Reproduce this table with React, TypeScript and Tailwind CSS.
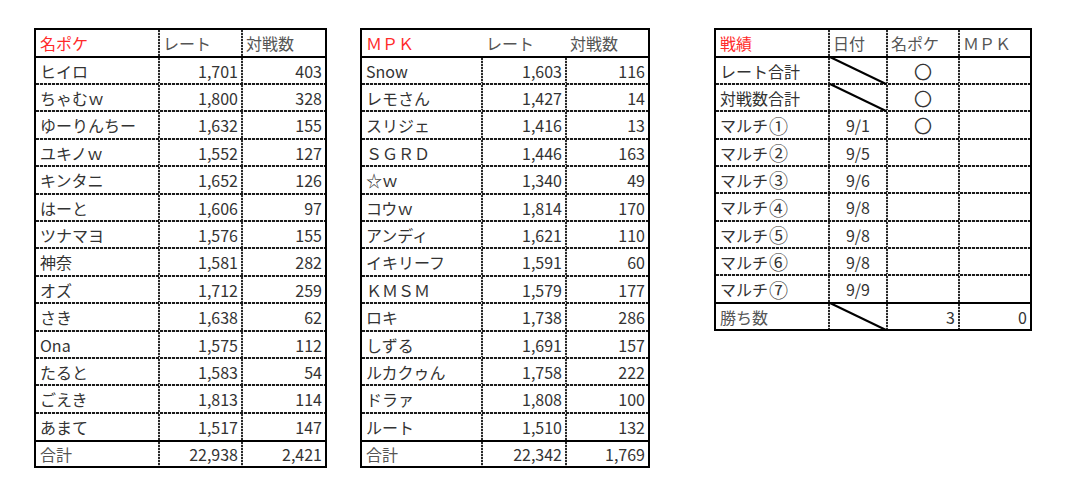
import React from "react";

type Cell = { t?: React.ReactNode; a?: "l" | "r" | "c"; red?: boolean; head?: boolean; diag?: boolean };

const HL =
  "h-[2px] bg-[repeating-linear-gradient(90deg,#1a1a1a_0px,#1a1a1a_3px,#e6e6e6_3px,#e6e6e6_4px)]";
const VL =
  "bg-[repeating-linear-gradient(180deg,#2a2a2a_0px,#2a2a2a_2px,#d8d8d8_2px,#d8d8d8_3px)]";

function Row({
  cells,
  widths,
  h,
  seps = true,
}: {
  cells: Cell[];
  widths: string[];
  h: string;
  seps?: boolean;
}) {
  return (
    <div className={`flex ${h}`}>
      {cells.map((c, j) => (
        <React.Fragment key={j}>
          {j > 0 && <div className={`w-[2px] shrink-0 ${seps ? VL : ""}`} />}
          <div
            className={`${widths[j]} shrink-0 relative flex items-center whitespace-nowrap ${
              c.a === "r"
                ? "justify-end pr-[3px]"
                : c.a === "c"
                ? "justify-center"
                : j === 0
                ? "justify-start pl-[4px]"
                : "justify-start pl-[3px]"
            } ${c.red ? "text-[#ff2a2a]" : c.head ? "text-[#555555]" : "text-[#333333]"}`}
          >
            {c.diag && (
              <svg
                className="absolute left-0 top-[-1px] w-full h-[calc(100%+2px)] overflow-visible"
                viewBox="0 0 100 100"
                preserveAspectRatio="none"
              >
                <line x1="0" y1="0" x2="100" y2="100" stroke="#000" strokeWidth="2" vectorEffect="non-scaling-stroke" />
              </svg>
            )}
            {c.t}
          </div>
        </React.Fragment>
      ))}
    </div>
  );
}

function Table({
  widths,
  header,
  headerSeps,
  rows,
  heights,
  total,
  totalH,
}: {
  widths: string[];
  header: Cell[];
  headerSeps: boolean;
  rows: Cell[][];
  heights: string[];
  total: Cell[];
  totalH: string;
}) {
  return (
    <div className="border-2 border-black flex flex-col shrink-0">
      <Row cells={header} widths={widths} h="h-[26px]" seps={headerSeps} />
      <div className="h-[2px] bg-black" />
      {rows.map((r, i) => (
        <React.Fragment key={i}>
          <Row cells={r} widths={widths} h={heights[i]} />
          {i < rows.length - 1 && <div className={HL} />}
        </React.Fragment>
      ))}
      <div className="h-[2px] bg-black" />
      <Row cells={total} widths={widths} h={totalH} />
    </div>
  );
}

const H14 = [
  "h-[25px]",
  "h-[25px]",
  "h-[26px]",
  "h-[25px]",
  "h-[26px]",
  "h-[25px]",
  "h-[25px]",
  "h-[26px]",
  "h-[25px]",
  "h-[26px]",
  "h-[25px]",
  "h-[25px]",
  "h-[26px]",
  "h-[26px]",
];
const H9 = ["h-[25px]", "h-[25px]", "h-[26px]", "h-[25px]", "h-[25px]", "h-[26px]", "h-[25px]", "h-[25px]", "h-[26px]"];

const t1: [string, string, string][] = [
  ["ヒイロ", "1,701", "403"],
  ["ちゃむｗ", "1,800", "328"],
  ["ゆーりんちー", "1,632", "155"],
  ["ユキノｗ", "1,552", "127"],
  ["キンタニ", "1,652", "126"],
  ["はーと", "1,606", "97"],
  ["ツナマヨ", "1,576", "155"],
  ["神奈", "1,581", "282"],
  ["オズ", "1,712", "259"],
  ["さき", "1,638", "62"],
  ["Ona", "1,575", "112"],
  ["たると", "1,583", "54"],
  ["ごえき", "1,813", "114"],
  ["あまて", "1,517", "147"],
];

const t2: [string, string, string][] = [
  ["Snow", "1,603", "116"],
  ["レモさん", "1,427", "14"],
  ["スリジェ", "1,416", "13"],
  ["ＳＧＲＤ", "1,446", "163"],
  ["☆ｗ", "1,340", "49"],
  ["コウｗ", "1,814", "170"],
  ["アンディ", "1,621", "110"],
  ["イキリーフ", "1,591", "60"],
  ["ＫＭＳＭ", "1,579", "177"],
  ["ロキ", "1,738", "286"],
  ["しずる", "1,691", "157"],
  ["ルカクゥん", "1,758", "222"],
  ["ドラァ", "1,808", "100"],
  ["ルート", "1,510", "132"],
];

const toRows = (d: [string, string, string][]): Cell[][] =>
  d.map(([a, b, c]) => [{ t: a }, { t: b, a: "r" }, { t: c, a: "r" }]);

const Maru = () => <span className="text-[18px] leading-none">〇</span>;
const Multi = ({ n }: { n: string }) => (
  <>
    マルチ<span className="text-[19px] leading-none ml-[1px]">{n}</span>
  </>
);

const t3: Cell[][] = [
  [{ t: "レート合計" }, { diag: true }, { t: <Maru />, a: "c" }, {}],
  [{ t: "対戦数合計" }, { diag: true }, { t: <Maru />, a: "c" }, {}],
  [{ t: <Multi n="①" /> }, { t: "9/1", a: "c" }, { t: <Maru />, a: "c" }, {}],
  [{ t: <Multi n="②" /> }, { t: "9/5", a: "c" }, {}, {}],
  [{ t: <Multi n="③" /> }, { t: "9/6", a: "c" }, {}, {}],
  [{ t: <Multi n="④" /> }, { t: "9/8", a: "c" }, {}, {}],
  [{ t: <Multi n="⑤" /> }, { t: "9/8", a: "c" }, {}, {}],
  [{ t: <Multi n="⑥" /> }, { t: "9/8", a: "c" }, {}, {}],
  [{ t: <Multi n="⑦" /> }, { t: "9/9", a: "c" }, {}, {}],
];

export default function App() {
  return (
    <div className="w-[1077px] h-[493px] bg-white overflow-hidden font-['Noto_Sans_CJK_JP','Noto_Sans_CJK_SC',sans-serif] text-[16px] leading-none">
      <div className="flex items-start pt-[28px] pl-[34px]">
        <Table
          widths={["w-[122px]", "w-[81px]", "w-[82px]"]}
          header={[{ t: "名ポケ", red: true }, { t: "レート", head: true }, { t: "対戦数", head: true }]}
          headerSeps={true}
          rows={toRows(t1)}
          heights={H14}
          total={[{ t: "合計", head: true }, { t: "22,938", a: "r" }, { t: "2,421", a: "r" }]}
          totalH="h-[24px]"
        />
        <div className="ml-[33px]">
          <Table
            widths={["w-[119px]", "w-[82px]", "w-[81px]"]}
            header={[{ t: "ＭＰＫ", red: true }, { t: "レート", head: true }, { t: "対戦数", head: true }]}
            headerSeps={false}
            rows={toRows(t2)}
            heights={H14}
            total={[{ t: "合計", head: true }, { t: "22,342", a: "r" }, { t: "1,769", a: "r" }]}
            totalH="h-[24px]"
          />
        </div>
        <div className="ml-[64px]">
          <Table
            widths={["w-[112px]", "w-[56px]", "w-[70px]", "w-[70px]"]}
            header={[
              { t: "戦績", red: true },
              { t: "日付", head: true },
              { t: "名ポケ", head: true },
              { t: "ＭＰＫ", head: true },
            ]}
            headerSeps={true}
            rows={t3}
            heights={H9}
            total={[{ t: "勝ち数", head: true }, { diag: true }, { t: "3", a: "r" }, { t: "0", a: "r" }]}
            totalH="h-[25px]"
          />
        </div>
      </div>
    </div>
  );
}
